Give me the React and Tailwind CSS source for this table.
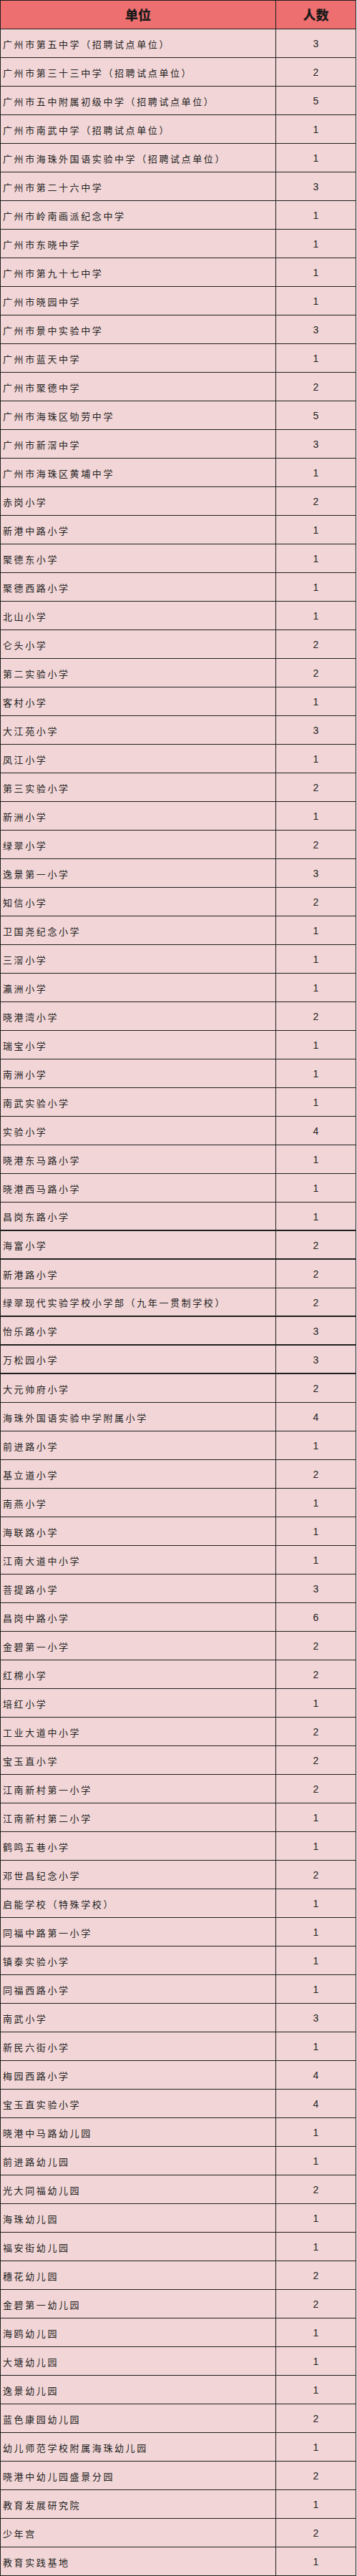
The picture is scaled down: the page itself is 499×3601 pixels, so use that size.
import React from 'react';

// 单位 / 人数 recruitment table
const rows = [
  ['广州市第五中学（招聘试点单位）', 3],
  ['广州市第三十三中学（招聘试点单位）', 2],
  ['广州市五中附属初级中学（招聘试点单位）', 5],
  ['广州市南武中学（招聘试点单位）', 1],
  ['广州市海珠外国语实验中学（招聘试点单位）', 1],
  ['广州市第二十六中学', 3],
  ['广州市岭南画派纪念中学', 1],
  ['广州市东晓中学', 1],
  ['广州市第九十七中学', 1],
  ['广州市晓园中学', 1],
  ['广州市景中实验中学', 3],
  ['广州市蓝天中学', 1],
  ['广州市聚德中学', 2],
  ['广州市海珠区劬劳中学', 5],
  ['广州市新滘中学', 3],
  ['广州市海珠区黄埔中学', 1],
  ['赤岗小学', 2],
  ['新港中路小学', 1],
  ['聚德东小学', 1],
  ['聚德西路小学', 1],
  ['北山小学', 1],
  ['仑头小学', 2],
  ['第二实验小学', 2],
  ['客村小学', 1],
  ['大江苑小学', 3],
  ['凤江小学', 1],
  ['第三实验小学', 2],
  ['新洲小学', 1],
  ['绿翠小学', 2],
  ['逸景第一小学', 3],
  ['知信小学', 2],
  ['卫国尧纪念小学', 1],
  ['三滘小学', 1],
  ['瀛洲小学', 1],
  ['晓港湾小学', 2],
  ['瑞宝小学', 1],
  ['南洲小学', 1],
  ['南武实验小学', 1],
  ['实验小学', 4],
  ['晓港东马路小学', 1],
  ['晓港西马路小学', 1],
  ['昌岗东路小学', 1, true],
  ['海富小学', 2, true],
  ['新港路小学', 2],
  ['绿翠现代实验学校小学部（九年一贯制学校）', 2, true],
  ['怡乐路小学', 3, true],
  ['万松园小学', 3, true],
  ['大元帅府小学', 2],
  ['海珠外国语实验中学附属小学', 4],
  ['前进路小学', 1],
  ['基立道小学', 2],
  ['南燕小学', 1],
  ['海联路小学', 1],
  ['江南大道中小学', 1],
  ['菩提路小学', 3],
  ['昌岗中路小学', 6],
  ['金碧第一小学', 2],
  ['红棉小学', 2],
  ['培红小学', 1],
  ['工业大道中小学', 2],
  ['宝玉直小学', 2],
  ['江南新村第一小学', 2],
  ['江南新村第二小学', 1],
  ['鹤鸣五巷小学', 1],
  ['邓世昌纪念小学', 2],
  ['启能学校（特殊学校）', 1],
  ['同福中路第一小学', 1],
  ['镇泰实验小学', 1],
  ['同福西路小学', 1],
  ['南武小学', 3],
  ['新民六街小学', 1],
  ['梅园西路小学', 4],
  ['宝玉直实验小学', 4],
  ['晓港中马路幼儿园', 1],
  ['前进路幼儿园', 1],
  ['光大同福幼儿园', 2],
  ['海珠幼儿园', 1],
  ['福安街幼儿园', 1],
  ['穗花幼儿园', 2],
  ['金碧第一幼儿园', 2],
  ['海鸥幼儿园', 1],
  ['大塘幼儿园', 1],
  ['逸景幼儿园', 1],
  ['蓝色康园幼儿园', 2],
  ['幼儿师范学校附属海珠幼儿园', 1],
  ['晓港中幼儿园盛景分园', 2],
  ['教育发展研究院', 1],
  ['少年宫', 2],
  ['教育实践基地', 1],
];

const cjk = "font-['Noto_Sans_CJK_SC','Noto_Sans',sans-serif]";

export default function App() {
  return (
    <div className="w-[499px] bg-white">
      <div className="w-[498px] border-t border-l border-r border-[#1e1e1e]">
        <div className={`flex h-[40px] border-b border-[#1e1e1e] bg-[#ee6f6f] text-[#1a1a1a] ${cjk}`}>
          <div className="flex w-[385px] items-center justify-center border-r border-[#1e1e1e] text-[18px] font-black">
            单位
          </div>
          <div className="flex flex-1 items-center justify-center text-[18px] font-black">
            人数
          </div>
        </div>
        {rows.map(([name, count, thick]) => (
          <div
            key={name}
            className={`flex h-[40px] bg-[#f2d6d7] text-[#222] ${thick ? 'border-b-2' : 'border-b'} border-[#1e1e1e]`}
          >
            <div className={`flex w-[385px] items-center border-r border-[#1e1e1e] pl-[3px] pt-[2px] text-[13px] tracking-[2.6px] whitespace-nowrap ${cjk}`}>
              {name}
            </div>
            <div className="flex flex-1 items-center justify-center pt-[2px] font-['Liberation_Sans',sans-serif] text-[14px]">
              {count}
            </div>
          </div>
        ))}
      </div>
    </div>
  );
}
